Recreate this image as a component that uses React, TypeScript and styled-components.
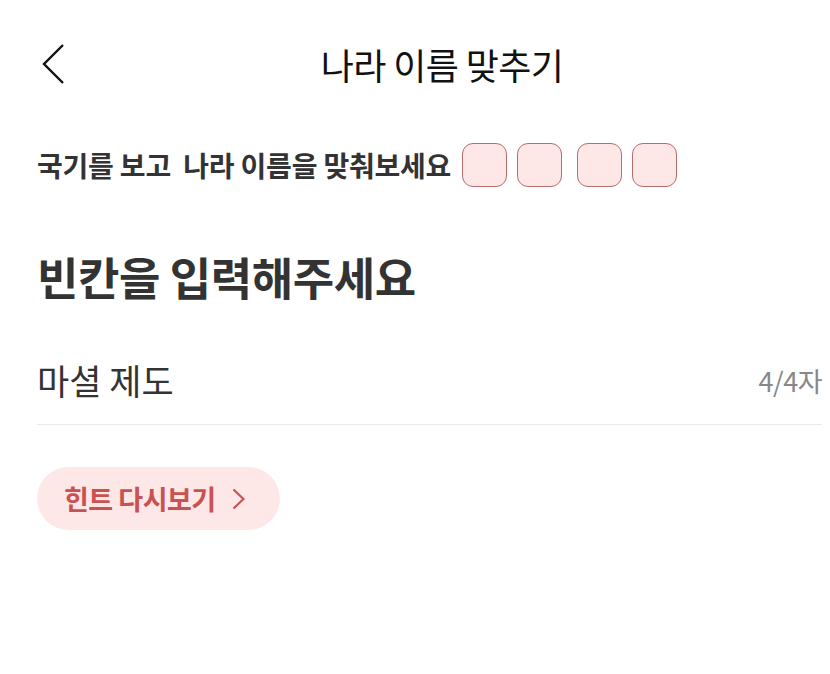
import React from "react";
import styled, { createGlobalStyle } from "styled-components";

const GlobalStyle = createGlobalStyle`
  html, body {
    margin: 0;
    padding: 0;
    background: #ffffff;
  }
  body {
    font-family: "Noto Sans CJK KR", "Noto Sans", sans-serif;
    color: #333333;
  }
`;

const Page = styled.div`
  width: 830px;
  min-height: 674px;
  background: #ffffff;
`;

const Header = styled.header`
  display: flex;
  align-items: center;
  height: 128px;
`;

const BackButton = styled.button`
  width: 68px;
  height: 60px;
  padding: 0 0 0 42px;
  border: none;
  background: transparent;
  display: flex;
  align-items: center;
  cursor: pointer;
`;

const Title = styled.h1`
  flex: 1;
  margin: 0;
  padding-right: 14px;
  text-align: center;
  font-size: 36px;
  font-weight: 400;
  color: #111111;
  letter-spacing: -0.6px;
`;

const Content = styled.main`
  padding: 0 8px 0 37px;
`;

const QuestionRow = styled.div`
  display: flex;
  align-items: center;
  margin-top: 15px;
  height: 44px;
`;

const Prompt = styled.p`
  margin: 0;
  font-size: 28px;
  font-weight: 700;
  color: #333333;
  letter-spacing: -0.2px;
  white-space: pre;
`;

const Blanks = styled.div`
  display: flex;
  gap: 15px;
  margin-left: 11px;
`;

const BlankWord = styled.div`
  display: flex;
  gap: 10px;
`;

const Blank = styled.span`
  box-sizing: border-box;
  width: 45px;
  height: 44px;
  border: 1.5px solid #b86d6d;
  border-radius: 11px;
  background: #fde7e7;
`;

const Heading = styled.h2`
  margin: 66px 0 0;
  font-size: 45px;
  font-weight: 700;
  color: #333333;
  letter-spacing: -0.4px;
  line-height: 48px;
`;

const InputRow = styled.div`
  display: flex;
  align-items: center;
  justify-content: space-between;
  margin-top: 57px;
  height: 66px;
  border-bottom: 1.5px solid #e9e9e9;
`;

const AnswerInput = styled.input`
  flex: 1;
  border: none;
  outline: none;
  padding: 0;
  font-family: "Noto Sans CJK KR", "Noto Sans", sans-serif;
  font-size: 35px;
  font-weight: 400;
  color: #333333;
  background: transparent;
  margin-top: -24px;
`;

const Counter = styled.span`
  font-size: 27px;
  color: #888888;
  letter-spacing: -0.5px;
  margin-top: -22px;
`;

const HintButton = styled.button`
  display: inline-flex;
  align-items: center;
  gap: 16px;
  margin-top: 42px;
  height: 63px;
  padding: 0 35px 0 27px;
  border: none;
  border-radius: 32px;
  background: #fde7e7;
  font-family: "Noto Sans CJK KR", "Noto Sans", sans-serif;
  font-size: 27px;
  font-weight: 700;
  color: #c9514f;
  letter-spacing: -0.5px;
  cursor: pointer;
`;

const App: React.FC = () => {
  return (
    <Page>
      <GlobalStyle />
      <Header>
        <BackButton aria-label="뒤로">
          <svg width="22" height="40" viewBox="0 0 22 40" fill="none">
            <path d="M21 1 L2 20 L21 39" stroke="#111" strokeWidth="2.4" strokeLinejoin="miter" />
          </svg>
        </BackButton>
        <Title>나라 이름 맞추기</Title>
      </Header>
      <Content>
        <QuestionRow>
          <Prompt>{"국기를 보고  나라 이름을 맞춰보세요"}</Prompt>
          <Blanks>
            <BlankWord>
              <Blank />
              <Blank />
            </BlankWord>
            <BlankWord>
              <Blank />
              <Blank />
            </BlankWord>
          </Blanks>
        </QuestionRow>
        <Heading>빈칸을 입력해주세요</Heading>
        <InputRow>
          <AnswerInput defaultValue="마셜 제도" />
          <Counter>4/4자</Counter>
        </InputRow>
        <HintButton>
          힌트 다시보기
          <svg width="13" height="22" viewBox="0 0 13 22" fill="none">
            <path d="M1.5 1.5 L11.5 11 L1.5 20.5" stroke="#c9514f" strokeWidth="2.2" />
          </svg>
        </HintButton>
      </Content>
    </Page>
  );
};

export default App;
